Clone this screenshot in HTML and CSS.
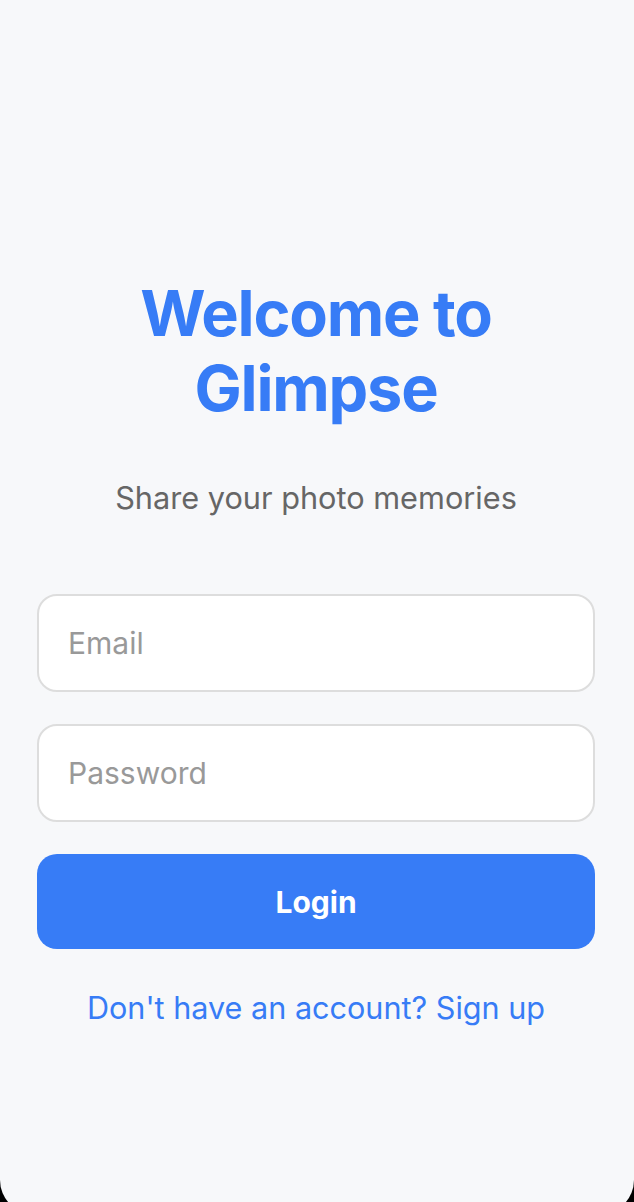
FILE: index.html
```html
<!DOCTYPE html>
<html>
<head>
<meta charset="utf-8">
<link rel="stylesheet" href="styles.css">
</head>
<body>
<div class="screen">
  <main class="login">
    <h1 class="title">Welcome to Glimpse</h1>
    <p class="subtitle">Share your photo memories</p>
    <form class="form">
      <input class="field" type="email" placeholder="Email">
      <input class="field" type="password" placeholder="Password">
      <button class="btn" type="button">Login</button>
    </form>
    <a class="link" href="#">Don't have an account? Sign up</a>
  </main>
</div>
</body>
</html>
```
FILE: styles.css
```css
html, body {
  margin: 0;
  padding: 0;
  background: #000;
}
body {
  font-family: Inter, "Noto Sans", sans-serif;
  overflow: hidden;
  height: 1202px;
}
.screen {
  background: #f7f8fa;
  height: 1214px;
  border-radius: 0 0 34px 34px;
}
.login {
  display: flex;
  flex-direction: column;
  align-items: center;
  padding: 276px 39px 0 37px;
}
.title {
  margin: 0;
  width: 400px;
  text-align: center;
  color: #377cf6;
  font-size: 63px;
  line-height: 75px;
  font-weight: 700;
  letter-spacing: -1.2px;
}
.subtitle {
  margin: 52px 0 0;
  color: #666;
  font-size: 30.7px;
  line-height: 40px;
}
.form {
  display: flex;
  flex-direction: column;
  gap: 32px;
  width: 558px;
  margin-top: 76px;
}
.field {
  box-sizing: border-box;
  height: 98px;
  border: 2px solid #dddddd;
  border-radius: 20px;
  background: #fff;
  padding: 0 29px;
  font-family: inherit;
  font-size: 30px;
  color: #333;
  outline: none;
}
.field::placeholder {
  color: #999;
}
.btn {
  height: 95px;
  border: none;
  border-radius: 20px;
  background: #377cf6;
  color: #fff;
  font-family: inherit;
  font-size: 30px;
  font-weight: 700;
}
.link {
  margin-top: 39px;
  color: #377cf6;
  font-size: 30.6px;
  line-height: 40px;
  text-decoration: none;
}
```
